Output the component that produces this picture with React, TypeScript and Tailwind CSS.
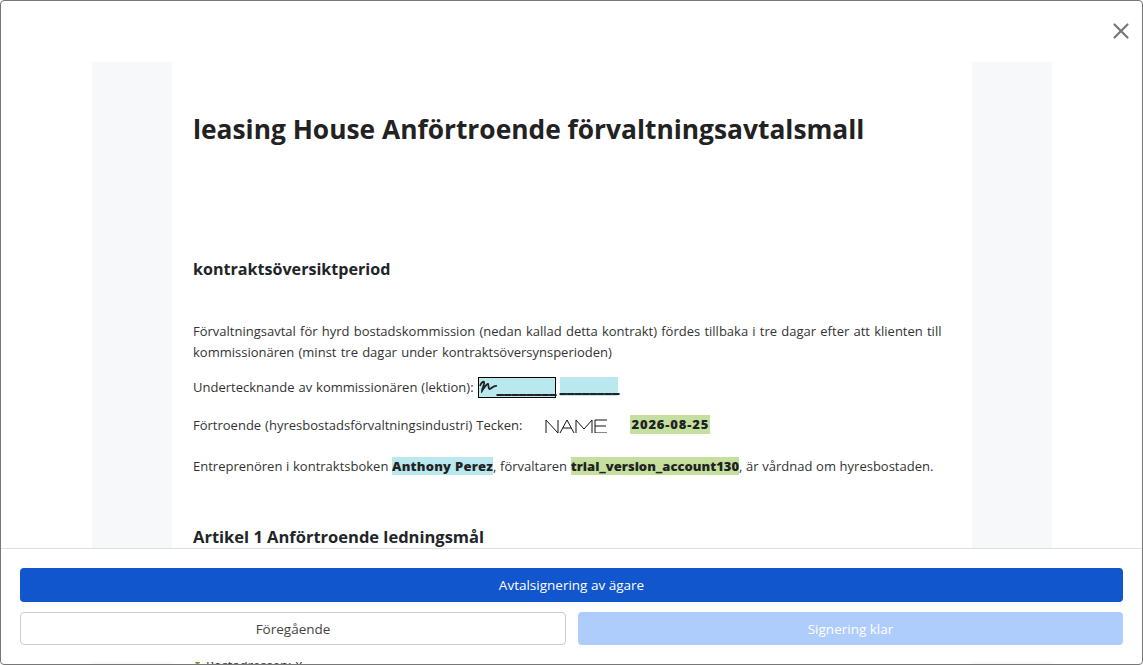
import { X } from 'lucide-react'

const FONT = "font-['Open_Sans','Noto_Sans',sans-serif]"

export default function App() {
  return (
    <div className={`relative h-[665px] w-[1143px] overflow-hidden rounded-[4px] border border-[#777] bg-white text-[#212529] ${FONT}`}>
      <button className="absolute right-[8px] top-[17px] text-[#777]">
        <X size={26} strokeWidth={2} />
      </button>

      {/* Document */}
      <div className="ml-[91px] mr-[90px] mt-[61px] h-[700px] bg-[#f7f8fa] px-[80px]">
        <div className="h-full bg-white px-[21px] text-[13px] text-[#333] [word-spacing:0.6px]">
          <h1 className="pt-[49px] text-[26.35px] font-bold leading-[36px] text-[#222] [word-spacing:0]">leasing House Anförtroende förvaltningsavtalsmall</h1>
          <h2 className="mt-[110px] text-[16.1px] font-bold leading-[24px] text-[#212529] [word-spacing:0]">kontraktsöversiktperiod</h2>
          <p className="mt-[40px] leading-[21px] [word-spacing:0.85px]">
            Förvaltningsavtal för hyrd bostadskommission (nedan kallad detta kontrakt) fördes tillbaka i tre dagar efter att klienten till kommissionären (minst tre dagar under kontraktsöversynsperioden)
          </p>
          <div className="mt-[13px] flex h-[24px] items-center">
            Undertecknande av kommissionären (lektion):
            <span className="mb-[2px] ml-[4px] flex h-[21px] w-[78px] items-end border border-black bg-[#b9e9ee]">
              <svg viewBox="0 0 19 13" className="mb-[4px] h-[13px] w-[19px] shrink-0" fill="none" stroke="#222" strokeWidth="1.8">
                <path d="M1 6 C2 3 4 1 5 2 C6 4 3 8 3 11 C5 8 7 4 9 4 C10 6 9 9 11 9 C13 8 15 5 18 6" />
              </svg>
              <span className="-ml-px whitespace-nowrap pb-[1px] text-[15px] font-extrabold leading-[17px] text-[#222]">________</span>
            </span>
            <span className="mb-[4px] ml-[4px] flex h-[19px] w-[58px] items-end bg-[#b9e9ee]">
              <span className="whitespace-nowrap pb-[1px] text-[15px] font-extrabold leading-[17px] text-[#222]">________</span>
            </span>
          </div>
          <div className="mt-[14px] flex h-[24px] items-center">
            Förtroende (hyresbostadsförvaltningsindustri) Tecken:
            <svg viewBox="0 0 62 14" className="ml-[23px] h-[14px] w-[62px]" fill="none" stroke="#111" strokeWidth="1">
              <path d="M1 14 V1 L13 14 V1" />
              <path d="M15 14 L22 1 L29 14 M18 9 H26" />
              <path d="M31 14 V1 L39 10 L47 1 V14" />
              <path d="M62 1 H50 V14 H62 M50 7 H61" />
            </svg>
            <span className="mb-[4px] ml-[23px] bg-[#c5df9f] px-[1px] font-extrabold leading-[19px] tracking-[0.85px] text-[#222]">2026-08-25</span>
          </div>
          <p className="mt-[16px] leading-[24px] [word-spacing:0.3px]">
            Entreprenören i kontraktsboken <span className="bg-[#b9e9ee] font-extrabold tracking-[0.2px] text-[#222]">Anthony Perez</span>, förvaltaren <span className="bg-[#c5df9f] font-extrabold text-[#222]">trial_version_account130</span>, är vårdnad om hyresbostaden.
          </p>
          <h2 className="mt-[47px] text-[16.5px] font-bold leading-[24px] text-[#212529] [word-spacing:0]">Artikel 1 Anförtroende ledningsmål</h2>
          <p className="mt-[107px] flex items-start gap-[6px] pl-[2px] leading-[18px]">
            <span className="mt-[3px] h-[5px] w-[5px] rounded-full bg-[#8a8a20]" />
            Postadressen: Y
          </p>
        </div>
      </div>

      {/* Footer overlay */}
      <div className="absolute inset-x-0 top-[547px] flex h-[114px] flex-col gap-[10px] border-t border-[#dcdfe4] bg-white px-[19px] pt-[19px]">
        <button className="h-[34px] rounded-[4px] bg-[#1156cc] text-[13.5px] text-white">Avtalsignering av ägare</button>
        <div className="flex gap-[12px]">
          <button className="h-[33px] w-[546px] rounded-[4px] border border-[#ccc] bg-white pt-[1px] text-[13.5px] text-[#444]">Föregående</button>
          <button className="h-[33px] flex-1 rounded-[4px] bg-[#aecdfd] pt-[1px] text-[13.5px] text-white">Signering klar</button>
        </div>
      </div>
    </div>
  )
}
